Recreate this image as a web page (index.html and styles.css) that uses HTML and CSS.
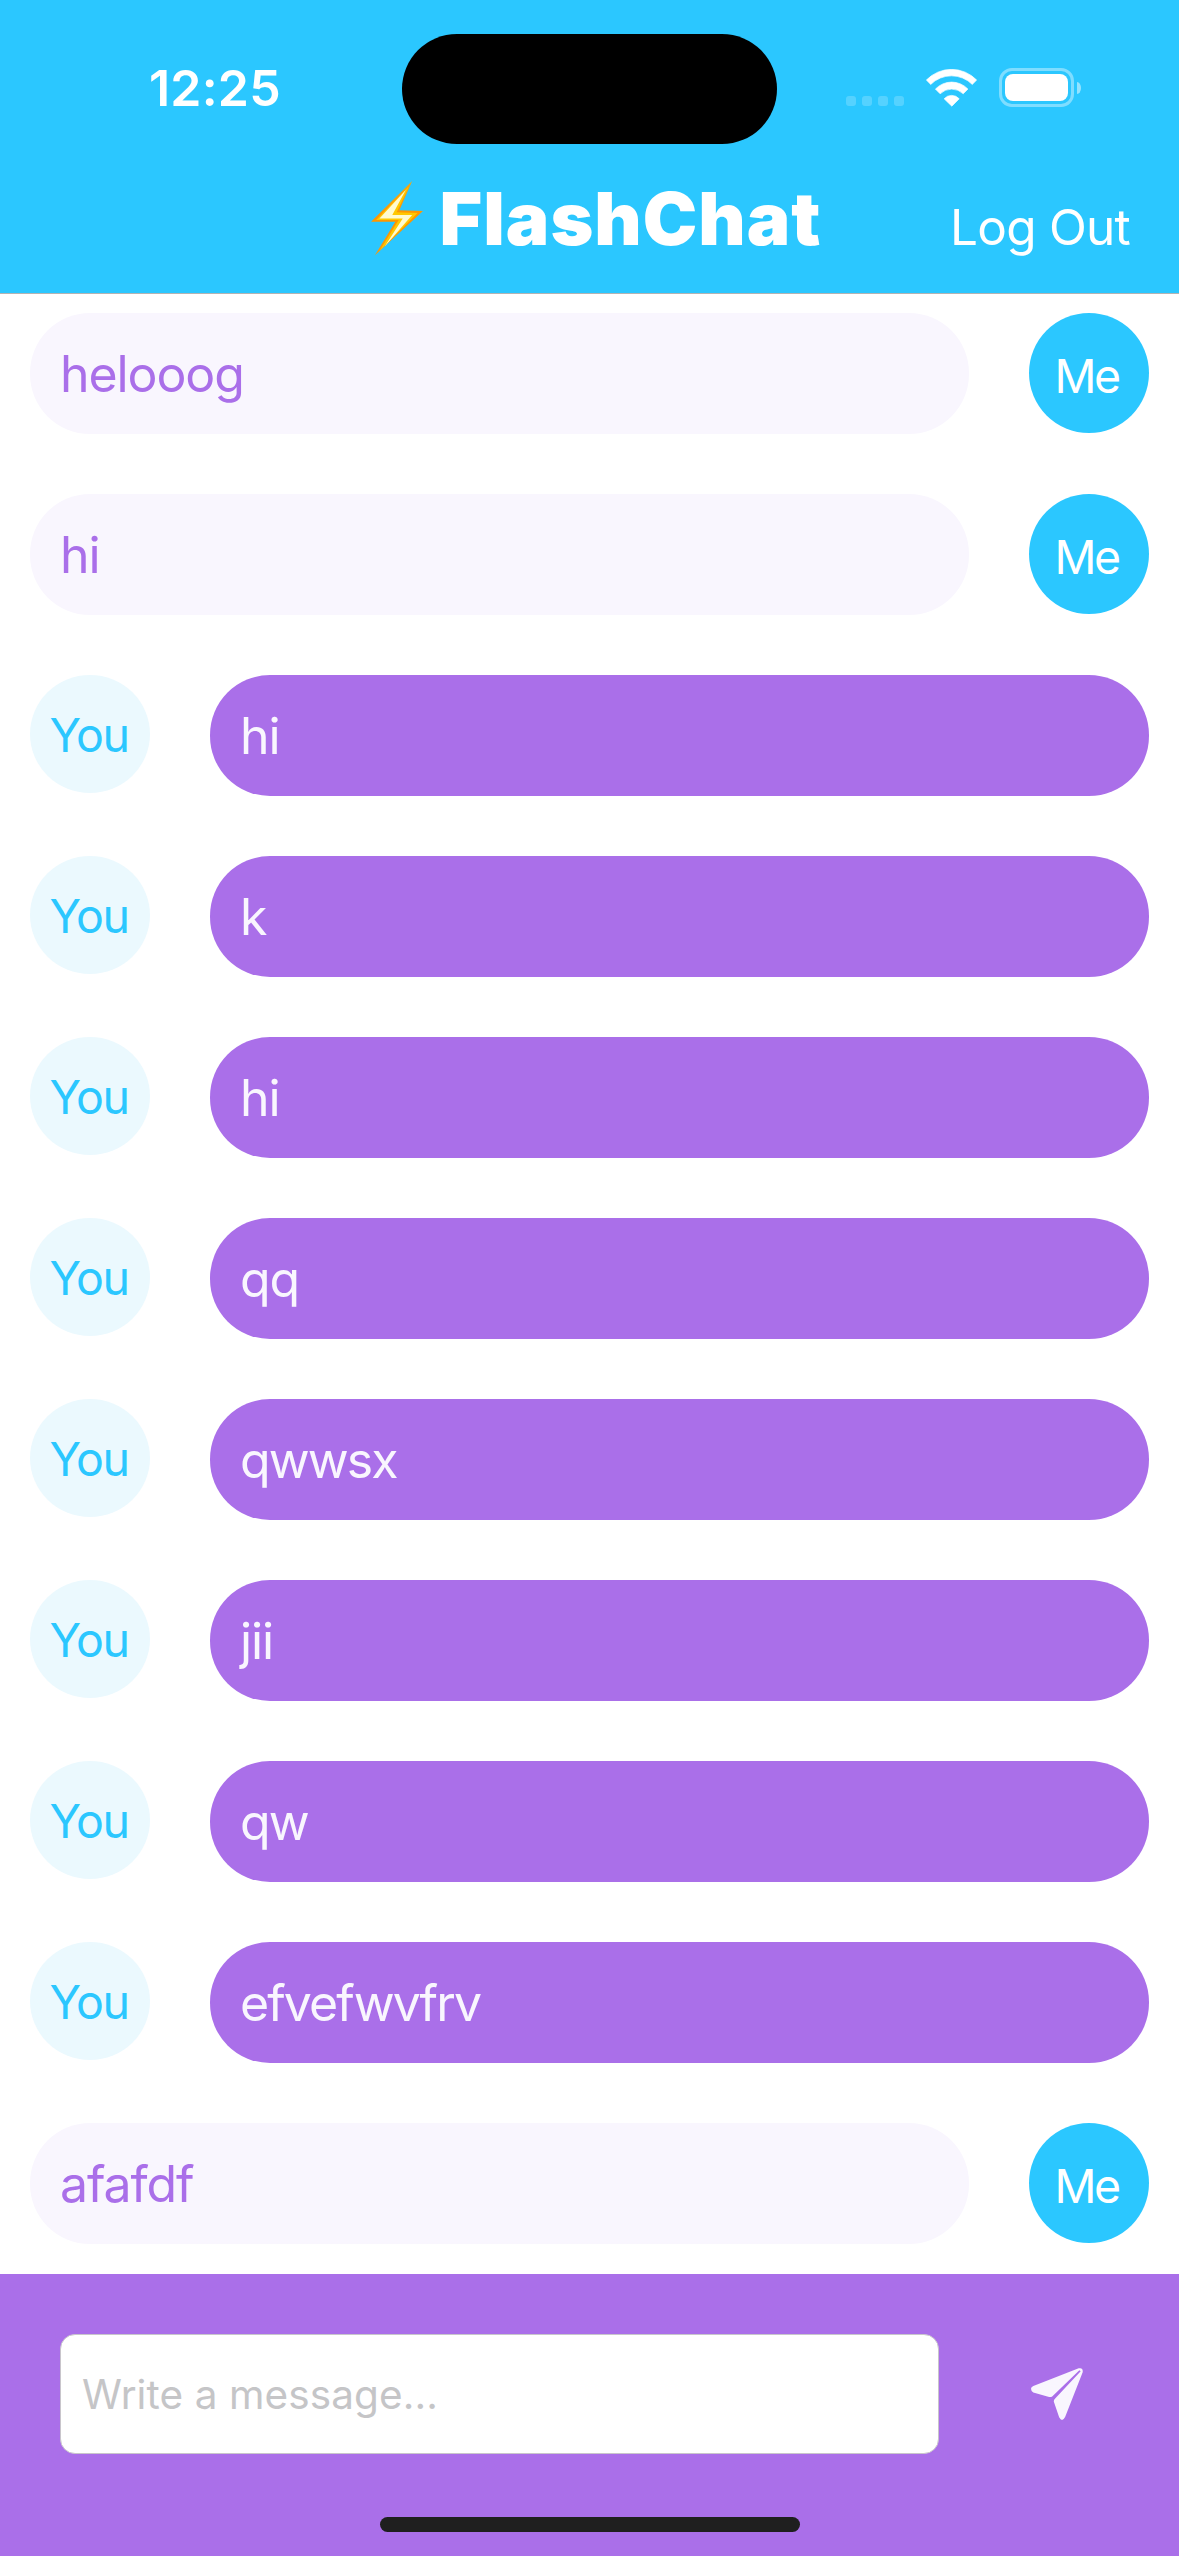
FILE: index.html
```
<!DOCTYPE html>
<html lang="en">
<head>
<meta charset="utf-8">
<title>FlashChat</title>
<link rel="stylesheet" href="styles.css">
</head>
<body>
<div class="screen">
  <header class="header">
    <div class="status">
      <span class="time">12:25</span>
      <div class="island"></div>
      <div class="indicators">
        <div class="signal"><i></i><i></i><i></i><i></i></div>
        <svg class="wifi" viewBox="318 147 152 112">
          <path d="M319 180A104 104 0 0 1 469 180L456 193A88 88 0 0 0 332 193Z"/>
          <path d="M346 207A66.700 66.700 0 0 1 443 207L429 221A49.500 49.500 0 0 0 360 221Z"/>
          <path d="M372 236A30 30 0 0 1 417 236L395 258Z"/>
        </svg>
        <div class="battery"><div class="battery-case"><div class="battery-level"></div></div><div class="battery-cap"></div></div>
      </div>
    </div>
    <nav class="nav">
      <h1 class="title"><svg class="bolt" viewBox="0 0 154 221">
          <defs>
            <linearGradient id="edge" x1="0" y1="0" x2="0" y2="1">
              <stop offset="0" stop-color="#f3a712"/><stop offset=".5" stop-color="#ff9500"/><stop offset="1" stop-color="#f79a0c"/>
            </linearGradient>
          </defs>
          <path fill="url(#edge)" d="M122 0L84 87L154 89L11 221L72 121L0 121Z"/>
          <path fill="#ffc800" d="M112 16L76 93L138 95L26 206L82 116L15 116Z"/>
          <path fill="#fffbd0" d="M103 27L63 101L122 101L40 195L94 111L25 111Z"/>
        </svg>FlashChat</h1>
      <a class="logout">Log Out</a>
    </nav>
  </header>

  <main class="messages">
    <div class="row"><div class="bubble mine">helooog</div><div class="avatar me">Me</div></div>
    <div class="row"><div class="bubble mine">hi</div><div class="avatar me">Me</div></div>
    <div class="row"><div class="avatar you">You</div><div class="bubble">hi</div></div>
    <div class="row"><div class="avatar you">You</div><div class="bubble">k</div></div>
    <div class="row"><div class="avatar you">You</div><div class="bubble">hi</div></div>
    <div class="row"><div class="avatar you">You</div><div class="bubble">qq</div></div>
    <div class="row"><div class="avatar you">You</div><div class="bubble tight">qwwsx</div></div>
    <div class="row"><div class="avatar you">You</div><div class="bubble">jii</div></div>
    <div class="row"><div class="avatar you">You</div><div class="bubble tight">qw</div></div>
    <div class="row"><div class="avatar you">You</div><div class="bubble tight">efvefwvfrv</div></div>
    <div class="row"><div class="bubble mine">afafdf</div><div class="avatar me">Me</div></div>
  </main>

  <footer class="footer">
    <div class="composer">
      <div class="field">Write a message...</div>
      <svg class="send" viewBox="453 803 157 157">
        <path d="M460 857L597 804Q611 801 609 816L556 951Q547 968 538 952L522 905Q521 899 526 895L603 813L599 810L517 889Q512 892 505 890L460 877Q453 873 453 866Q453 860 460 857Z"/>
      </svg>
    </div>
    <div class="home-bar"></div>
  </footer>
</div>
</body>
</html>
```
FILE: styles.css
```
* { box-sizing: border-box; }

body {
  margin: 0;
  background: #fff;
  font-family: Inter, "Liberation Sans", sans-serif;
}

.screen {
  display: flex;
  flex-direction: column;
  width: 1179px;
  height: 2556px;
  overflow: hidden;
}

.header {
  height: 294px;
  background: #2bc7ff;
  border-bottom: 1px solid #b3b3b3;
  color: #fff;
}

.status {
  display: grid;
  grid-template-columns: 402px 375px 402px;
  height: 177px;
}

.time {
  padding-left: 149px;
  font-size: 50px;
  font-weight: 600;
  line-height: 176px;
  letter-spacing: 0.2px;
}

.island {
  height: 110px;
  margin-top: 34px;
  border-radius: 55px;
  background: #000;
}

.indicators {
  display: flex;
  align-items: flex-end;
  height: 39px;
  margin-top: 68px;
  padding-left: 69px;
  gap: 22px;
}

.signal {
  display: flex;
  gap: 6px;
  padding-bottom: 1px;
}

.signal i {
  width: 10px;
  height: 10px;
  border-radius: 3px;
  background: rgba(255, 255, 255, 0.2);
}

.wifi {
  width: 51px;
  height: 37.500px;
  margin-bottom: 0.500px;
  fill: #fff;
  stroke: #fff;
  stroke-width: 2;
  stroke-linejoin: round;
}

.battery {
  display: flex;
  align-items: center;
  gap: 3px;
}

.battery-case {
  width: 75px;
  height: 39px;
  padding: 3px;
  border: 3px solid rgba(255, 255, 255, 0.4);
  border-radius: 13px;
}

.battery-level {
  height: 27px;
  border-radius: 8px;
  background: #fff;
}

.battery-cap {
  width: 4px;
  height: 12px;
  border-radius: 0 4px 4px 0 / 0 6px 6px 0;
  background: rgba(255, 255, 255, 0.5);
}

.nav {
  display: grid;
  grid-template-columns: 1fr auto 1fr;
  align-items: baseline;
  padding: 0 49px 0 62px;
}

.title {
  grid-column: 2;
  margin: 0;
  font-size: 73px;
  font-weight: 900;
  line-height: 83px;
  letter-spacing: 1px;
  white-space: nowrap;
}

.bolt {
  width: 52px;
  height: 74.500px;
  margin-right: 17px;
  vertical-align: -10.500px;
}

.logout {
  justify-self: end;
  font-size: 49.500px;
  letter-spacing: -0.75px;
}

.messages {
  display: flex;
  flex-direction: column;
  flex: 1;
  gap: 60px;
  padding: 19px 30px 30px;
}

.row {
  display: flex;
  align-items: flex-start;
  gap: 60px;
}

.bubble {
  flex: 1;
  height: 121px;
  padding: 0 30px;
  border-radius: 60px;
  background: #aa6fe9;
  color: #f9f6fe;
  font-size: 50px;
  line-height: 122px;
  letter-spacing: -1.1px;
}

.bubble.mine {
  background: #f9f6fe;
  color: #aa6fe9;
}

.bubble.tight { letter-spacing: -1.900px; }

.avatar {
  width: 120px;
  border-radius: 50%;
  font-size: 46.500px;
  text-align: center;
}

.avatar.me {
  height: 120px;
  padding: 3px 5px 0 0;
  background: #2bc7ff;
  color: #fff;
  line-height: 120px;
  letter-spacing: -2.500px;
}

.avatar.you {
  height: 118px;
  padding: 1px 2px 0 0;
  background: #ebf9fe;
  color: #2bc7ff;
  line-height: 118px;
  letter-spacing: -1.400px;
}

.footer {
  height: 282px;
  padding-top: 60px;
  background: #aa6fe9;
}

.composer {
  display: flex;
  align-items: center;
  gap: 92px;
  padding: 0 96px 0 60px;
}

.field {
  flex: 1;
  height: 120px;
  padding-left: 21px;
  border: 1px solid #c8c5cb;
  border-radius: 15px;
  background: #fff;
  color: #c5c5c7;
  font-size: 40.500px;
  line-height: 120px;
  letter-spacing: 0.1px;
}

.send {
  width: 52px;
  height: 52px;
  fill: #f9f6fe;
}

.home-bar {
  width: 420px;
  height: 15px;
  margin: 63px auto 0;
  border-radius: 8px;
  background: #1f1f1f;
}
```
